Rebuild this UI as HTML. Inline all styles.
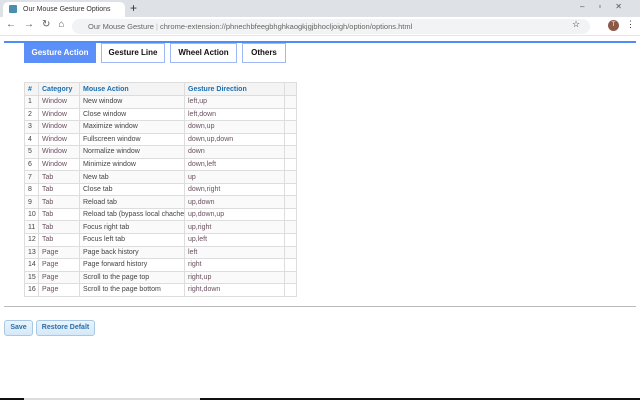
<!DOCTYPE html>
<html><head><style>
*{margin:0;padding:0;box-sizing:border-box}
body{width:640px;height:400px;overflow:hidden;background:#fff;font-family:"Liberation Sans",Arial,sans-serif;position:relative}
.abs{position:absolute}
.strip{left:0;top:0;width:640px;height:17px;background:#dee1e6}
.tab{left:3px;top:2px;width:122px;height:16px;background:#fff;border-radius:5px 5px 0 0;font-size:7px;color:#333;line-height:15px;padding-left:20px}
.tb{left:0;top:17px;width:640px;height:19px;background:#fff;border-bottom:1px solid #e6e6e6}
.omni{left:72px;top:19px;width:518px;height:15px;background:#f1f3f4;border-radius:8px;font-size:7.5px;line-height:15px;color:#666;padding-left:16px}
.btn{top:43px;height:20px;border:1px solid #9fb8f5;font-size:8px;font-weight:bold;text-align:center;line-height:18px;color:#111;background:#fff}
table{position:absolute;left:24px;top:82px;width:272px;table-layout:fixed;border-collapse:collapse;font-size:7px;border:1px solid #bbb}
td,th{border:1px solid #ddd;height:12.56px;padding:0 3px;text-align:left;white-space:nowrap;overflow:hidden}
th{color:#1a6fb0;font-weight:bold;background:#f4f4f4;height:13px}
td{color:#444}
td.c,td.d{color:#6a5060}
tr:nth-child(even) td{background:#fafafa}
.b2{top:320px;height:16px;border:1px solid #a8c9e6;border-radius:3px;background:linear-gradient(#eaf4fc,#d6e8f7);color:#2a6ea8;font-size:7px;font-weight:bold;text-align:center;line-height:14px}
</style></head><body>
<div class="abs strip"></div>
<div class="abs tab">Our Mouse Gesture Options Sett&nbsp; ✕</div>
<div class="abs" style="left:9px;top:5px;width:8px;height:8px;background:#4a8fb0;border-radius:1px"></div>
<div class="abs" style="left:130px;top:1px;font-size:12px;color:#333">+</div>
<div class="abs" style="left:580px;top:2px;font-size:8px;color:#555;letter-spacing:14px">–▫✕</div>
<div class="abs tb"></div>
<div class="abs" style="left:6px;top:19px;font-size:10px;color:#555;letter-spacing:8px">←→↻⌂</div>
<div class="abs omni">Our Mouse Gesture <span style="color:#bbb">|</span> chrome-extension://phnechbfeegbhghkaogkjgjbhocljoigh/option/options.html</div>
<div class="abs" style="left:572px;top:19px;font-size:9px;color:#333">☆</div>
<div class="abs" style="left:608px;top:20px;width:11px;height:11px;border-radius:50%;background:#8d5a4a;color:#fff;font-size:6px;text-align:center;line-height:11px">T</div>
<div class="abs" style="left:626px;top:19px;font-size:9px;color:#333">⋮</div>
<div class="abs" style="left:4px;top:41px;width:632px;height:2px;background:#4c8ef7"></div>
<div class="abs btn" style="left:24px;width:72px;background:#5c8ff7;border-color:#5c8ff7;color:#fff">Gesture Action</div>
<div class="abs btn" style="left:101px;width:64px">Gesture Line</div>
<div class="abs btn" style="left:170px;width:67px">Wheel Action</div>
<div class="abs btn" style="left:242px;width:44px">Others</div>
<table>
<colgroup><col style="width:14px"><col style="width:41px"><col style="width:105px"><col style="width:100px"><col style="width:12px"></colgroup>
<tr><th>#</th><th>Category</th><th>Mouse Action</th><th>Gesture Direction</th><th></th></tr>
<tr><td>1</td><td class="c">Window</td><td>New window</td><td class="d">left,up</td><td></td></tr>
<tr><td>2</td><td class="c">Window</td><td>Close window</td><td class="d">left,down</td><td></td></tr>
<tr><td>3</td><td class="c">Window</td><td>Maximize window</td><td class="d">down,up</td><td></td></tr>
<tr><td>4</td><td class="c">Window</td><td>Fullscreen window</td><td class="d">down,up,down</td><td></td></tr>
<tr><td>5</td><td class="c">Window</td><td>Normalize window</td><td class="d">down</td><td></td></tr>
<tr><td>6</td><td class="c">Window</td><td>Minimize window</td><td class="d">down,left</td><td></td></tr>
<tr><td>7</td><td class="c">Tab</td><td>New tab</td><td class="d">up</td><td></td></tr>
<tr><td>8</td><td class="c">Tab</td><td>Close tab</td><td class="d">down,right</td><td></td></tr>
<tr><td>9</td><td class="c">Tab</td><td>Reload tab</td><td class="d">up,down</td><td></td></tr>
<tr><td>10</td><td class="c">Tab</td><td>Reload tab (bypass local chache)</td><td class="d">up,down,up</td><td></td></tr>
<tr><td>11</td><td class="c">Tab</td><td>Focus right tab</td><td class="d">up,right</td><td></td></tr>
<tr><td>12</td><td class="c">Tab</td><td>Focus left tab</td><td class="d">up,left</td><td></td></tr>
<tr><td>13</td><td class="c">Page</td><td>Page back history</td><td class="d">left</td><td></td></tr>
<tr><td>14</td><td class="c">Page</td><td>Page forward history</td><td class="d">right</td><td></td></tr>
<tr><td>15</td><td class="c">Page</td><td>Scroll to the page top</td><td class="d">right,up</td><td></td></tr>
<tr><td>16</td><td class="c">Page</td><td>Scroll to the page bottom</td><td class="d">right,down</td><td></td></tr>
</table>
<div class="abs" style="left:4px;top:306px;width:632px;height:1px;background:#bbb"></div>
<div class="abs b2" style="left:4px;width:29px">Save</div>
<div class="abs b2" style="left:36px;width:59px">Restore Defalt</div>
<div class="abs" style="left:0;top:398px;width:640px;height:2px;background:#111"></div>
<div class="abs" style="left:24px;top:398px;width:176px;height:2px;background:#ddd"></div>
</body></html>
